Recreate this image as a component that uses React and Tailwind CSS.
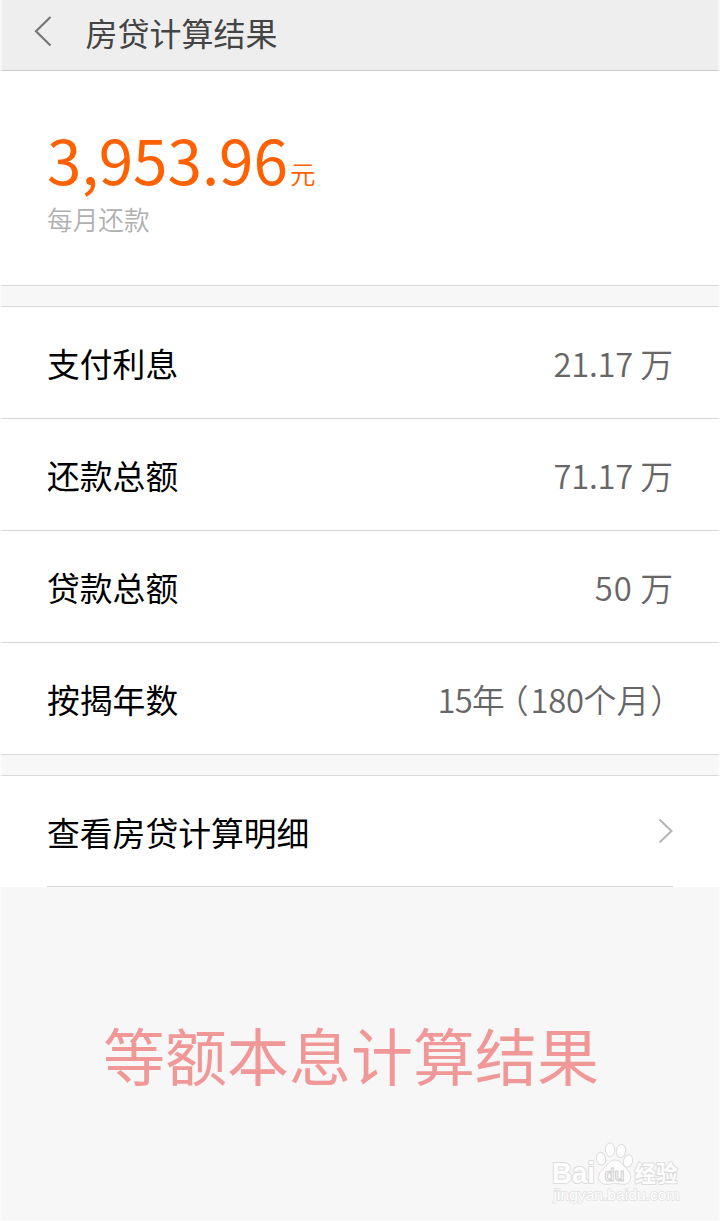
const rows = [
  { label: '支付利息', value: <><span className="-tracking-[0.3px]">21.17</span> 万</> },
  { label: '还款总额', value: <><span className="-tracking-[0.3px]">71.17</span> 万</> },
  { label: '贷款总额', value: <><span className="tracking-[1px]">50</span> 万</> },
  {
    label: '按揭年数',
    value: (
      <span className="-mr-[10px] whitespace-nowrap">
        <span className="-tracking-[0.8px]">15</span>
        <span className="-tracking-[9px]">年</span><span className="tracking-[2px]">（</span>
        <span className="-tracking-[0.3px]">180</span>个<span className="tracking-[1px]">月</span>）
      </span>
    ),
  },
];

function Header() {
  return (
    <header className="flex h-[71px] items-start border-b border-[#cccccc] bg-[#eeeeee] pl-[34px]">
      <svg className="mt-[15px] h-8 w-[18px]" viewBox="0 0 18 32" fill="none" stroke="#777777" strokeWidth="2.2">
        <path d="M16.5 2 L2 16.2 L16.5 30.5" />
      </svg>
      <h1 className="ml-[33.5px] mt-[8px] text-[32px] leading-[48px] text-[#444444]">房贷计算结果</h1>
    </header>
  );
}

function Payment() {
  return (
    <section className="h-[215px] border-b border-[#d8d8d8] bg-white pl-[47px] pt-[55px]">
      <div className="flex h-16 items-baseline text-[#ff6000]">
        <span className="text-[62px] leading-[64px]">3,953.96</span>
        <span className="relative -top-px ml-0.5 text-[25.5px] leading-none font-[350]">元</span>
      </div>
      <p className="mt-[15px] text-[25.7px] leading-[28px] font-[350] text-[#b0b0b0]">每月还款</p>
    </section>
  );
}

function Watermark() {
  return (
    <svg className="absolute bottom-[10px] right-[36px] h-[72px] w-[134px]" viewBox="0 0 134 72" fill="#fefefe" stroke="#dcdcdc" strokeWidth="1">
      <g paintOrder="stroke" strokeWidth="2" strokeLinejoin="round">
        <text x="2" y="44" fontFamily="Liberation Sans" fontWeight="bold" fontSize="29" textLength="43" lengthAdjust="spacingAndGlyphs">Bai</text>
        <text x="84.5" y="43" fontFamily="Noto Sans CJK SC" fontWeight="bold" fontSize="22.5" textLength="43" lengthAdjust="spacingAndGlyphs">经验</text>
      </g>
      <ellipse cx="51" cy="19.7" rx="4.6" ry="6.4" transform="rotate(-12 51 19.7)" />
      <ellipse cx="60" cy="10.7" rx="4.7" ry="6.8" />
      <ellipse cx="71" cy="12" rx="4.7" ry="6.6" transform="rotate(10 71 12)" />
      <ellipse cx="78" cy="22" rx="4.6" ry="6.2" transform="rotate(18 78 22)" />
      <path d="M65 21 C59 21 58 26 53 30 C47 35 47 43 54 45 C58 46 61 44.5 65 44.5 C69 44.5 72 46 76 45 C82 43 82 35 77 30 C72 26 71 21 65 21Z" />
      <text x="54.5" y="42" fontFamily="Liberation Sans" fontWeight="bold" fontSize="17.5" fill="#f7f7f7" stroke="#cfcfcf" textLength="20" lengthAdjust="spacingAndGlyphs">du</text>
      <text x="3.5" y="61" fontFamily="Liberation Sans" fontSize="14.5" paintOrder="stroke" stroke="#e2e2e2" strokeWidth="1.4" textLength="126" lengthAdjust="spacingAndGlyphs">jingyan.baidu.com</text>
    </svg>
  );
}

export default function App() {
  return (
    <div lang="zh-CN" className="relative flex h-[1221px] w-[720px] flex-col overflow-hidden bg-[#f7f7f7] font-['Noto_Sans_CJK_SC',sans-serif]">
      <Header />
      <Payment />
      <section className="mt-5 border-t border-[#d8d8d8] bg-white">
        {rows.map(({ label, value }) => (
          <div key={label} className="flex h-28 items-center justify-between border-b border-[#d8d8d8] px-[47px]">
            <span className="text-[32.8px] leading-[48px] text-black">{label}</span>
            <span className="text-[32.8px] leading-[48px] font-[350] text-[#666666]">{value}</span>
          </div>
        ))}
      </section>
      <section className="mt-5 h-28 border-t border-[#d8d8d8] bg-white px-[47px]">
        <div className="flex h-[111px] items-center justify-between border-b border-[#d8d8d8]">
          <span className="pt-px text-[32.8px] leading-[48px] text-black">查看房贷计算明细</span>
          <svg className="h-[26px] w-4" viewBox="0 0 16 26" fill="none" stroke="#b5b5b5" strokeWidth="2">
            <path d="M2.5 1.5 L14.5 13 L2.5 24.5" />
          </svg>
        </div>
      </section>
      <p className="mt-[121px] pl-[103px] text-[62px] leading-[92px] text-[#f09898]">等额本息计算结果</p>
      <Watermark />
      <div className="pointer-events-none absolute inset-0 border-x-2 border-b border-white/50" />
    </div>
  );
}
